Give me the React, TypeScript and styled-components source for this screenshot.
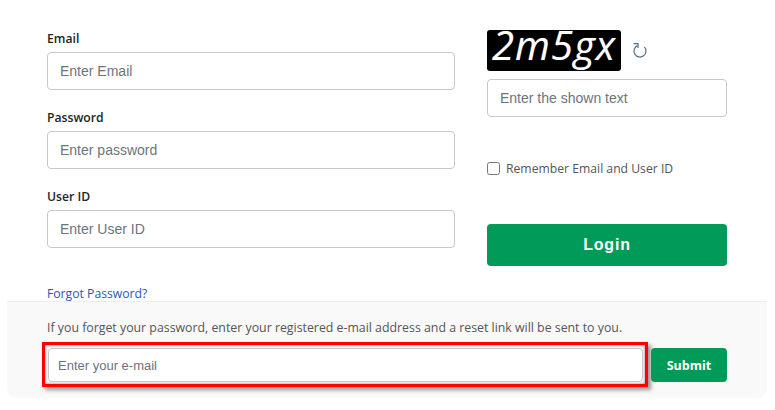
import React from "react";
import styled, { createGlobalStyle } from "styled-components";

const Global = createGlobalStyle`
  html, body { margin: 0; padding: 0; background: #fff; }
  body { font-family: "Open Sans", "Noto Sans", sans-serif; }
  * { box-sizing: border-box; }
`;

const Page = styled.div`
  width: 775px;
  height: 410px;
  padding: 28px 8px 0 7px;
  display: flex;
  flex-direction: column;
`;

const FormGrid = styled.div`
  display: grid;
  grid-template-columns: 408px 240px;
  column-gap: 32px;
  padding-left: 40px;
  height: 273px;
`;

const LeftColumn = styled.div`
  display: flex;
  flex-direction: column;
  gap: 17px;
`;

const Field = styled.div`
  display: flex;
  flex-direction: column;
  gap: 3px;
`;

const Label = styled.label`
  height: 21px;
  line-height: 21px;
  font-size: 12.2px;
  font-weight: 600;
  color: #212529;
`;

const TextInput = styled.input`
  width: 100%;
  height: 38px;
  padding: 0 12px;
  background: #fff;
  border: 1px solid #c8c8c8;
  border-radius: 4px;
  font-family: "Liberation Sans", Arial, sans-serif;
  font-size: 14px;
  color: #495057;
  outline: none;
  &::placeholder { color: #6c757d; opacity: 1; }
`;

const ForgotLink = styled.a`
  margin-top: 20px;
  height: 18px;
  line-height: 18px;
  font-size: 12.2px;
  color: #2b56b8;
  text-decoration: none;
`;

const RightColumn = styled.div`
  display: flex;
  flex-direction: column;
`;

const CaptchaRow = styled.div`
  display: flex;
  align-items: center;
  height: 42px;
  margin: 1px 0 8px;
  gap: 11px;
`;

const CaptchaImage = styled.div`
  width: 134px;
  height: 41px;
  background: #000;
  border-radius: 3px;
  color: #fff;
  font-family: "Open Sans", sans-serif;
  font-style: italic;
  font-size: 40px;
  line-height: 30px;
  letter-spacing: 1px;
  text-align: center;
  text-shadow: 0 0 1px rgba(255, 255, 255, 0.5);
  user-select: none;
`;

const RefreshGlyph = styled.svg`
  width: 16px;
  height: 17px;
  color: #5a6f87;
`;

const RememberRow = styled.label`
  display: flex;
  align-items: center;
  gap: 6px;
  margin-top: 41px;
  height: 20px;
  font-size: 12.2px;
  color: #555;
`;

const Check = styled.input`
  width: 13px;
  height: 13px;
  margin: 0;
`;

const LoginButton = styled.button`
  margin-top: 46px;
  height: 42px;
  width: 240px;
  background: #019a59;
  color: #fff;
  border: none;
  border-radius: 4px;
  font-family: "Liberation Sans", Arial, sans-serif;
  font-weight: 700;
  font-size: 16px;
  letter-spacing: 0.8px;
`;

const ResetPanel = styled.div`
  width: 760px;
  height: 97px;
  background: #f9f9f9;
  border-top: 1px solid #eeeeee;
  border-radius: 0 0 10px 10px;
  padding: 16px 40px 0 35px;
`;

const ResetHint = styled.p`
  margin: 0 0 4px 5px;
  height: 20px;
  line-height: 20px;
  font-size: 12.33px;
  color: #555;
`;

const ResetRow = styled.div`
  display: flex;
  align-items: flex-start;
  gap: 3px;
`;

const InputFrame = styled.div`
  flex: 1;
  display: flex;
  padding: 3px 2px 2px 3px;
  border: 3px solid #f00;
  box-shadow: 3px 3px 4px rgba(0, 0, 0, 0.4), inset 0 0 3px rgba(0, 0, 0, 0.5);
`;

const EmailInput = styled(TextInput)`
  height: 34px;
  padding: 0 9px;
  font-size: 13px;
`;

const SubmitButton = styled.button`
  width: 76px;
  height: 34px;
  margin-top: 6px;
  background: #019a59;
  color: #fff;
  border: none;
  border-radius: 4px;
  font-family: "Open Sans", sans-serif;
  font-weight: 700;
  font-size: 12.5px;
`;

export default function App() {
  return (
    <Page>
      <Global />
      <FormGrid>
        <LeftColumn>
          <Field>
            <Label>Email</Label>
            <TextInput placeholder="Enter Email" />
          </Field>
          <Field>
            <Label>Password</Label>
            <TextInput placeholder="Enter password" />
          </Field>
          <Field>
            <Label>User ID</Label>
            <TextInput placeholder="Enter User ID" />
          </Field>
          <ForgotLink href="#">Forgot Password?</ForgotLink>
        </LeftColumn>
        <RightColumn>
          <CaptchaRow>
            <CaptchaImage>2m5gx</CaptchaImage>
            <RefreshGlyph viewBox="0 0 16 17" fill="none" stroke="currentColor" strokeWidth="1.2">
              <path d="M12.3 4.9 A6 6 0 1 1 5.5 3.6" />
              <path d="M1.5 1.6 H6 V6" />
            </RefreshGlyph>
          </CaptchaRow>
          <TextInput placeholder="Enter the shown text" />
          <RememberRow>
            <Check type="checkbox" />
            Remember Email and User ID
          </RememberRow>
          <LoginButton>Login</LoginButton>
        </RightColumn>
      </FormGrid>
      <ResetPanel>
        <ResetHint>If you forget your password, enter your registered e-mail address and a reset link will be sent to you.</ResetHint>
        <ResetRow>
          <InputFrame>
            <EmailInput placeholder="Enter your e-mail" />
          </InputFrame>
          <SubmitButton>Submit</SubmitButton>
        </ResetRow>
      </ResetPanel>
    </Page>
  );
}
